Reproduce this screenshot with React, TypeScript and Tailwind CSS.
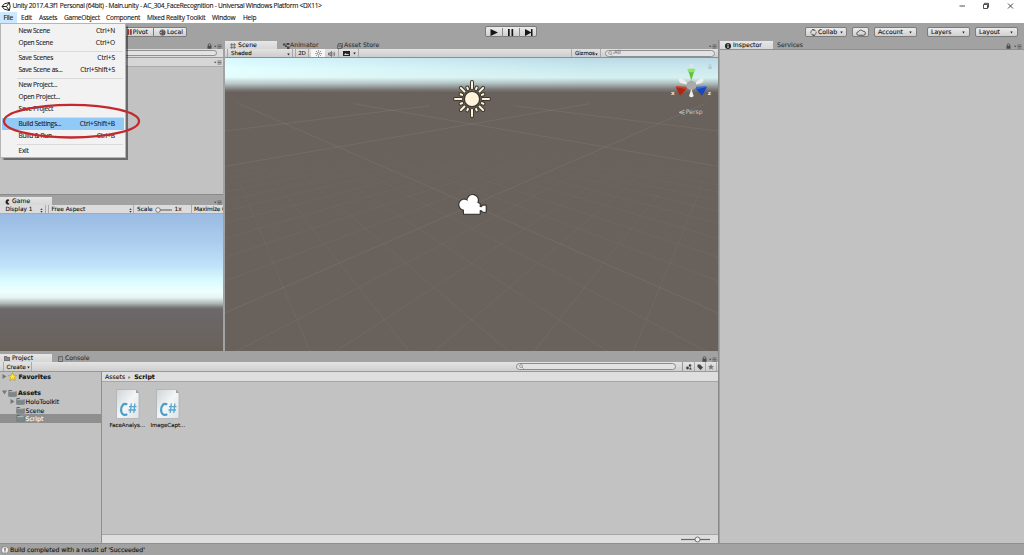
import type { ReactNode } from "react";

const menuBar = [
  { label: "File", cls: "w-[17px] pl-[3.5px] bg-[#cce8ff]" },
  { label: "Edit", cls: "w-[18px] pl-[4px]" },
  { label: "Assets", cls: "w-[25px] pl-[4px]" },
  { label: "GameObject", cls: "w-[42px] pl-[4px]" },
  { label: "Component", cls: "w-[41px] pl-[4px]" },
  { label: "Mixed Reality Toolkit", cls: "w-[65px] pl-[4px]" },
  { label: "Window", cls: "w-[31px] pl-[4px]" },
  { label: "Help", cls: "w-[24px] pl-[4px]" },
];

const fileMenu = [
  [
    { label: "New Scene", keys: "Ctrl+N" },
    { label: "Open Scene", keys: "Ctrl+O" },
  ],
  [
    { label: "Save Scenes", keys: "Ctrl+S" },
    { label: "Save Scene as...", keys: "Ctrl+Shift+S" },
  ],
  [
    { label: "New Project...", keys: "" },
    { label: "Open Project...", keys: "" },
    { label: "Save Project", keys: "" },
  ],
  [
    { label: "Build Settings...", keys: "Ctrl+Shift+B", active: true },
    { label: "Build & Run", keys: "Ctrl+B" },
  ],
  [{ label: "Exit", keys: "" }],
];

const scripts = ["FaceAnalys...", "ImageCapt..."];

/* ---------- small icons ---------- */

const UnityLogo = () => (
  <svg className="h-[11px] w-[10px]" viewBox="0 0 24 24" fill="none" stroke="#222" strokeWidth="2.4">
    <path d="M2.500 12L8 5.500l12-3 2 9.500-2 9.500-12-3zM2.500 12H13M13 12l7-9.500M13 12l7 9.500" />
  </svg>
);

const Lock = ({ cls = "" }: { cls?: string }) => (
  <svg className={`h-[6px] w-[5px] ${cls}`} viewBox="0 0 10 12">
    <path d="M2.5 6V4a2.5 2.5 0 015 0v2" fill="none" stroke="#4a4a4a" strokeWidth="1.6" />
    <rect x="1" y="5.5" width="8" height="6" fill="#4a4a4a" />
  </svg>
);

const PaneMenu = ({ cls = "" }: { cls?: string }) => (
  <svg className={`h-[5px] w-[8px] ${cls}`} viewBox="0 0 16 10">
    <path d="M0 3.5h5L2.5 6.5z" fill="#444" />
    <path d="M7 2h8M7 5h8M7 8h8" stroke="#555" strokeWidth="1.5" />
  </svg>
);

const Caret = ({ cls = "" }: { cls?: string }) => (
  <svg className={`h-[3px] w-[3px] shrink-0 ${cls}`} viewBox="0 0 6 6">
    <path d="M0.500 1h5L3 5z" fill="#222" />
  </svg>
);

const UpDown = ({ cls = "" }: { cls?: string }) => (
  <svg className={`h-[5px] w-[3px] ${cls}`} viewBox="0 0 6 10">
    <path d="M0.5 4h5L3 0.5zM0.5 6h5L3 9.5z" fill="#444" />
  </svg>
);

const Folder = () => (
  <svg className="h-[8px] w-[9px] shrink-0" viewBox="0 0 18 16">
    <path d="M1 3q0-1 1-1h5l1.500 2H16q1 0 1 1v9q0 1-1 1H2q-1 0-1-1z" fill="#5e6668" />
    <path d="M1 7h16v7q0 1-1 1H2q-1 0-1-1z" fill="#7d8789" />
    <path d="M2.500 4.500h13v2h-13z" fill="#c9d0d1" />
  </svg>
);

const Fold = ({ open = false, cls = "h-[5px] w-[5px]" }: { open?: boolean; cls?: string }) => (
  <svg className={`shrink-0 ${cls}`} viewBox="0 0 10 10">
    <path d={open ? "M0 1h10L5 9z" : "M1 0v10l8-5z"} fill="#777" />
  </svg>
);

const Collab = () => (
  <svg className="h-[7px] w-[7px]" viewBox="0 0 14 14" fill="none" stroke="#444" strokeWidth="1.500">
    <path d="M2 9A5.500 5.500 0 017 1.500M12 5A5.500 5.500 0 017 12.500M7 1.500q3 0 4 2.500M7 12.500q-3 0-4-2.500" />
    <path d="M4 1h4v3M10 13H6v-3" />
  </svg>
);

const Cloud = () => (
  <svg className="h-[7px] w-[10px]" viewBox="0 0 20 14" fill="none" stroke="#333" strokeWidth="1.600">
    <path d="M5 12.500a3.500 3.500 0 010-7A5 5 0 0114 4.500a4 4 0 011.500 8z" />
  </svg>
);

const ScriptFile = () => (
  <svg className="h-[32px] w-[25px]" viewBox="0 0 25 32">
    <defs>
      <linearGradient id="paper" x1="0" y1="0" x2="1" y2="1">
        <stop offset="0" stopColor="#cdd3d6" />
        <stop offset="0.5" stopColor="#f3f5f6" />
        <stop offset="1" stopColor="#dfe4e7" />
      </linearGradient>
    </defs>
    <path d="M1.500 1.500h19.500l3 3.500v25.500H1.500z" fill="url(#paper)" stroke="#a9adaf" strokeWidth="0.7" />
    <path d="M21 1.500v3.500h3z" fill="#9aa0a3" />
    <path d="M12.200 16.500q-2.400-1.600-4.400 0.400-2 2.200-1.700 5.600 .300 3.300 2.700 4.200 1.800.500 3.400-.600" fill="none" stroke="#4b9cc6" strokeWidth="2.200" />
    <path d="M16.300 15.500l-1.100 9.500M19.900 15.500l-1.100 9.500M14 18.600h7.500M13.500 22h7.500" fill="none" stroke="#5ba6cc" strokeWidth="1.300" />
  </svg>
);

/* ---------- building blocks ---------- */

const Tab = ({ children, cls = "" }: { children: ReactNode; cls?: string }) => (
  <div className={`flex h-[8px] items-center bg-gradient-to-b from-[#e6e6e6] to-[#d6d6d6] pt-[1px] ${cls}`}>
    {children}
  </div>
);

const ToolButton = ({ children, cls = "" }: { children: ReactNode; cls?: string }) => (
  <div
    className={`flex h-[10px] items-center rounded-[2px] border border-[#7c7c7c] bg-gradient-to-b from-[#ececec] to-[#cfcfcf] pt-[1px] ${cls}`}
  >
    {children}
  </div>
);

const FileMenu = () => (
  <div className="absolute left-0 top-[23px] z-10 h-[135px] w-[126px] border border-[#b5b5b5] bg-[#f2f2f2] pt-[0.6px] font-['Open_Sans',sans-serif] text-[6.6px] leading-[12px] text-[#1a1a1a] shadow-[1.5px_1.5px_1px_rgba(0,0,0,0.45)]">
    {fileMenu.map((group, i) => (
      <div key={i} className={i === 0 ? "" : "mt-[1px] pt-[1px]"}>
        {i > 0 && <div className="ml-[16px] mr-[2px] h-[1px] bg-[#dadada]" />}
        {group.map((item) => (
          <div
            key={item.label}
            className={`mx-[1px] flex h-[12px] justify-between pl-[16.5px] pr-[9px] ${
              "active" in item ? "bg-[#91c9f7]" : ""
            }`}
          >
            <span className="tracking-[-0.25px]">{item.label}</span>
            <span className="tracking-[-0.1px]">{item.keys}</span>
          </div>
        ))}
      </div>
    ))}
  </div>
);

const Highlight = () => (
  <svg className="absolute left-0 top-[100px] z-20 h-[42px] w-[144px]" viewBox="0 0 144 42">
    <ellipse cx="71.500" cy="21.200" rx="67.500" ry="16.300" fill="none" stroke="#c22a2f" strokeWidth="2.300" />
  </svg>
);

// lines of the ground plane, both families meet on the centre axis
const HORIZON = 95;
const gridLines = Array.from({ length: 17 }, (_, i) => {
  const k = i - 3;
  const y = HORIZON + 1 / (0.00143 + 0.00046 * k);
  return { slope: (y - HORIZON) / 815, major: k === 3 };
});

const SceneView = () => (
  <div className="relative h-[293px] overflow-hidden bg-[#69615b]">
    <div className="absolute inset-x-0 top-0 h-[34px] bg-[linear-gradient(180deg,#bad9e6_0%,#c9e8ee_30%,#d6f0f0_58%,#b5c8c8_72%,#7c7a78_92%,#6c6663_100%)]" />
    <div className="absolute inset-x-0 top-0 h-[33px] bg-[linear-gradient(180deg,#d6f8ff_0%,#e4ffff_35%,#e4fcfb_58%,#b8c6c6_78%,#6e6967_100%)] [mask-image:linear-gradient(90deg,black,transparent_75%)]" />
    <svg className="absolute inset-0 h-[293px] w-[493px]" viewBox="15 9 1479 879" fill="none">
      <defs>
        <linearGradient id="far" x1="0" y1="95" x2="0" y2="888" gradientUnits="userSpaceOnUse">
          <stop offset="0.2" stopColor="#fff" stopOpacity="0" />
          <stop offset="0.4" stopColor="#fff" stopOpacity="0.6" />
          <stop offset="1" stopColor="#fff" />
        </linearGradient>
        <mask id="fade" maskUnits="userSpaceOnUse" x="0" y="95" width="1510" height="800">
          <rect x="0" y="95" width="1510" height="800" fill="url(#far)" />
        </mask>
        <clipPath id="ground">
          <rect x="0" y="145" width="1510" height="760" />
        </clipPath>
      </defs>
      {gridLines.map(({ slope, major }, i) => (
        <g
          key={i}
          stroke="#8c8b88"
          strokeWidth="2.500"
          strokeOpacity={major ? 0.32 : 0.26}
          mask={major ? undefined : "url(#fade)"}
          clipPath="url(#ground)"
        >
          <path d={`M-60 ${HORIZON}L1600 ${HORIZON + 1660 * slope}`} />
          <path d={`M1570 ${HORIZON}L-90 ${HORIZON + 1660 * slope}`} />
        </g>
      ))}
      <g stroke="#8c8b88" strokeWidth="2.500" strokeOpacity="0.32">
        <path d="M400 146L1494 334M1110 146L15 334" />
        <path d="M880 152L1494 228M630 152L15 228" />
      </g>

      {/* directional light */}
      {["#3d3932", "#fff3da"].map((color, i) => (
        <g key={color} stroke={color} strokeWidth={i === 0 ? 12 : 6} strokeLinecap="round">
          {Array.from({ length: 16 }, (_, r) => (
            <path
              key={r}
              d={r % 4 === 0 ? "M0 -32V-51" : r % 2 === 0 ? "M0 -32V-47" : "M0 -32V-37"}
              transform={`translate(756 132) rotate(${r * 22.5})`}
            />
          ))}
          <circle cx="756" cy="132" r={i === 0 ? 19 : 18} fill={color} />
        </g>
      ))}

      {/* camera */}
      <g fill="#fff" stroke="#3a3633" strokeWidth="7" strokeLinejoin="round" paintOrder="stroke">
        <path d="M732 476V464A15 15 0 11743 438A15.500 15.500 0 11772 443L779 447V456L784 457L789 452H797V470H789L784 465L779 466V476Z" />
      </g>

      {/* orientation gizmo */}
      <g>
        <path d="M1414 92L1390 74a5 9 -45 00-8 10zM1414 92L1437 74a5 9 45 018 10z" fill="#eee" />
        <path d="M1403 42h22l-11 34z" fill="#5fc437" />
        <path d="M1402 43q12 -5 24 0l-3 7q-9 3 -18 0z" fill="#8be566" />
        <path d="M1367 96L1402 99L1380 122z" fill="#a92814" />
        <path d="M1367 96L1371 93L1402 96L1398 103z" fill="#d14127" />
        <path d="M1461 96L1426 99L1446 122z" fill="#1946b8" />
        <path d="M1461 96L1457 93L1426 96L1430 103z" fill="#3668e8" />
        <path d="M1400 84l14-8 14 7v15l-14 9-14-8z" fill="#aaa9a8" />
        <path d="M1414 102l7 21q-7 8-14 0z" fill="#eee" />
        <path d="M1394 165l-16 7 16 7M1378 172h16" stroke="#ccc" strokeWidth="2" />
      </g>
      <g fill="#e8e8e8" className="font-['DejaVu_Sans',sans-serif] text-[17px] font-bold">
        <text x="1408" y="37">y</text>
        <text x="1353" y="121">x</text>
        <text x="1463" y="121">z</text>
        <text x="1397" y="178" className="text-[18.5px] font-normal" fill="#c8c8c8">Persp</text>
      </g>
      <path d="M1467 34v-5q3-4 6 0v5" stroke="#b9c5c7" strokeWidth="2" />
      <rect x="1465" y="34" width="10" height="8" fill="#b9c5c7" />
    </svg>
  </div>
);

const TitleBar = () => (
  <div className="flex h-[12px] items-center bg-white pl-[1px] font-['Open_Sans',sans-serif]">
    <UnityLogo />
    <span className="ml-[1.500px] pt-[1px] text-[6.600px] tracking-[-0.255px]">
      Unity 2017.4.3f1 Personal (64bit) - Main.unity - AC_304_FaceRecognition - Universal Windows Platform &lt;DX11&gt;
    </span>
    <svg className="ml-auto mr-[9px] h-[8px] w-[56px]" viewBox="0 0 56 8" fill="none" stroke="#222" strokeWidth="0.800">
      <path d="M0.500 4h5.500M24.500 2.500h4v4h-4zM25.500 2.500v-1.200h4v4h-1M49 1.500l5 5M54 1.500l-5 5" />
    </svg>
  </div>
);

const MainToolbar = () => (
  <div className="flex h-[17px] items-center bg-[#a2a2a2]">
    <ToolButton cls="ml-[110px] w-[43px] justify-end rounded-r-none border-r-0 pr-[5px]">
      <svg className="mr-[1px] h-[6px] w-[5px]" viewBox="0 0 10 12">
        <path d="M1 1h3v10H1M6 1h3v10H6" fill="#a33" stroke="#444" />
      </svg>
      Pivot
    </ToolButton>
    <ToolButton cls="w-[34px] gap-[1px] rounded-l-none pl-[5px]">
      <svg className="h-[7px] w-[7px]" viewBox="0 0 14 14" fill="none" stroke="#444" strokeWidth="1.400">
        <circle cx="7" cy="7" r="5.500" fill="#c7bebe" />
        <path d="M2 5h10M2 9h10M7 2v10" />
        <path d="M6 7h5v4H6z" fill="#a55" />
      </svg>
      Local
    </ToolButton>
    <ToolButton cls="ml-[298px] h-[11px] w-[52px] pt-0">
      <svg className="h-[9px] w-[50px]" viewBox="0 0 50 9">
        <path d="M4.500 1l7.500 3.500L4.500 8zM22 1h1.700v7H22zM25.500 1h1.700v7h-1.700zM39 1l6.500 3.500L39 8zM45 1h1.500v7H45z" fill="#161616" />
        <path d="M16.500 0v9M33.500 0v9" stroke="#888" />
      </svg>
    </ToolButton>
    <ToolButton cls="ml-[268px] w-[42px] gap-[1px] pl-[4px]">
      <Collab />
      Collab
      <Caret cls="ml-[2px]" />
    </ToolButton>
    <ToolButton cls="ml-[5px] w-[17px] justify-center">
      <Cloud />
    </ToolButton>
    <ToolButton cls="ml-[5px] w-[43px] justify-between pl-[3px] pr-[4px]">
      Account <Caret />
    </ToolButton>
    <ToolButton cls="ml-[10px] w-[43px] justify-between pl-[3px] pr-[4px]">
      Layers <Caret />
    </ToolButton>
    <ToolButton cls="ml-[5px] w-[43px] justify-between pl-[3px] pr-[4px]">
      Layout <Caret />
    </ToolButton>
  </div>
);

const GameView = () => (
  <>
    <div className="flex h-[11px] items-end border-t border-[#8a8a8a] bg-[#a2a2a2]">
      <Tab cls="w-[52px] pl-[5px]">
        <svg className="mr-[2px] h-[6px] w-[5px]" viewBox="0 0 10 12">
          <path d="M9 2Q5-1 2 3q-2 3 0 6 3 4 7 1L5 6z" fill="#222" />
        </svg>
        Game
      </Tab>
      <PaneMenu cls="ml-auto mr-[1px]" />
    </div>
    <div className="flex h-[9px] items-center overflow-hidden border-b border-[#aaa] bg-[#dcdcdc] text-[5.800px]">
      <div className="flex h-full w-[46px] items-center justify-between border-r border-[#aaa] pl-[5.500px] pr-[2px] pt-[2px]">
        Display 1 <UpDown />
      </div>
      <div className="ml-[2px] flex h-full w-[86px] items-center justify-between border-x border-[#aaa] pl-[2.500px] pr-[1px] pt-[2px]">
        Free Aspect <UpDown />
      </div>
      <span className="ml-[3px] pt-[2px]">Scale</span>
      <svg className="ml-[2px] mt-[1px] h-[6px] w-[17px] shrink-0" viewBox="0 0 17 6">
        <path d="M3 3h14" stroke="#555" />
        <circle cx="3" cy="3" r="2.300" fill="#eee" stroke="#555" strokeWidth="0.700" />
      </svg>
      <span className="ml-[3px] pt-[2px]">1x</span>
      <div className="ml-auto flex h-full w-[32px] shrink-0 items-center overflow-hidden whitespace-nowrap border-l border-[#aaa] pl-[2px] pt-[2px] tracking-[-0.150px]">
        Maximize O
      </div>
    </div>
    <div className="h-[137px] bg-[linear-gradient(180deg,#9bbbe2_0%,#aacdee_20%,#c1e3fa_38%,#dafcff_49%,#efffff_57%,#e4f4f3_61%,#abb3b3_65.500%,#7c7c7b_68%,#6c686a_69.500%,#69615b_100%)]" />
  </>
);

const SceneToolbar = () => (
  <div className="flex h-[9px] items-center border-b border-[#8f8f8f] bg-gradient-to-b from-[#e2e2e2] to-[#cdcdcd] text-[5.500px]">
    <div className="ml-[2px] flex h-full w-[66px] items-center justify-between border-x border-[#aaa] pl-[3px] pr-[2px] pt-[2px]">
      Shaded <Caret />
    </div>
    <div className="ml-[2px] flex h-full w-[14px] items-center justify-center border-x border-[#aaa] pt-[2px]">2D</div>
    <div className="ml-[2px] flex h-full w-[14px] items-center justify-center bg-[#f6f6f6]">
      <svg className="h-[7px] w-[7px]" viewBox="0 0 14 14" fill="none" stroke="#555" strokeWidth="1.200">
        <circle cx="7" cy="7" r="2.400" />
        <path d="M7 0v3M7 11v3M0 7h3M11 7h3M2 2l2 2M10 10l2 2M12 2l-2 2M4 10l-2 2" />
      </svg>
    </div>
    <div className="flex h-full w-[14px] items-center justify-center border-r border-[#aaa] pt-[1px]">
      <svg className="h-[6px] w-[8px]" viewBox="0 0 16 12" fill="none" stroke="#555" strokeWidth="1.300">
        <path d="M1 4h3l3-3v10L4 8H1z" fill="#999" />
        <path d="M9.500 3q2 3 0 6M12 1.500q3 4.500 0 9" />
      </svg>
    </div>
    <div className="flex h-full w-[20px] items-center justify-between border-r border-[#aaa] pl-[4px] pr-[2px] pt-[1px]">
      <svg className="h-[5px] w-[7px]" viewBox="0 0 14 10">
        <path d="M0 0h14v10H0z" fill="#222" />
        <path d="M2 8l3-4 3 3 2-2 2 3z" fill="#ddd" />
      </svg>
      <Caret />
    </div>
    <div className="ml-auto flex h-full w-[30px] items-center justify-between border-x border-[#aaa] pl-[3px] pr-[2px] pt-[2px] tracking-[-0.100px]">
      Gizmos <Caret />
    </div>
    <div className="ml-[4px] mr-[3px] flex h-[7px] w-[110px] items-center rounded-full border border-[#909090] bg-[#e2e2e2] pl-[2px] text-[#777]">
      <svg className="h-[5px] w-[6px] shrink-0" viewBox="0 0 12 10" fill="none" stroke="#888" strokeWidth="1.200">
        <circle cx="4" cy="4" r="3" />
        <path d="M6 6l3 3M9 4h3" />
      </svg>
      All
    </div>
  </div>
);

const ProjectPanel = () => (
  <div className="flex w-[718px] flex-col">
    <div className="flex h-[11px] items-end bg-[#a2a2a2]">
      <Tab cls="w-[52px] pl-[4px]">
        <svg className="mr-[2px] h-[5px] w-[6px]" viewBox="0 0 12 10">
          <path d="M0.500 1h5l1 2h5v6.500h-11z" fill="#888" stroke="#333" />
        </svg>
        Project
      </Tab>
      <div className="ml-[6px] flex h-[8px] items-center gap-[2px] pt-[1px] text-[#333]">
        <svg className="h-[6px] w-[5px]" viewBox="0 0 10 12" fill="none" stroke="#333">
          <path d="M1 1h8v10H1zM3 3.500h2M3 6h2" />
        </svg>
        Console
      </div>
      <Lock cls="ml-auto mr-[2px]" />
      <PaneMenu cls="mr-[1px]" />
    </div>
    <div className="flex h-[10px] items-center border-b border-[#999] bg-gradient-to-b from-[#e4e4e4] to-[#cecece] text-[5.800px]">
      <div className="ml-[3px] flex h-full w-[29px] items-center gap-[1px] border-x border-[#aaa] pl-[2.500px] pt-[2px]">
        Create <Caret />
      </div>
      <div className="ml-auto mr-[6px] flex h-[7px] w-[160px] items-center rounded-full border border-[#8b8b8b] bg-[#e2e2e2] pl-[2px]">
        <svg className="h-[5px] w-[5px]" viewBox="0 0 10 10" fill="none" stroke="#777" strokeWidth="1.200">
          <circle cx="4" cy="4" r="3" />
          <path d="M6 6l3.500 3.500" />
        </svg>
      </div>
      <div className="flex h-full w-[12px] items-center justify-center border-l border-[#999]">
        <svg className="h-[6px] w-[6px]" viewBox="0 0 12 12" fill="#444">
          <circle cx="8" cy="3" r="2.500" />
          <circle cx="3" cy="8" r="2.800" />
          <path d="M6 11l2.800-5 2.800 5z" />
        </svg>
      </div>
      <div className="flex h-full w-[12px] items-center justify-center border-x border-[#aaa]">
        <svg className="h-[6px] w-[6px]" viewBox="0 0 12 12" fill="#444">
          <path d="M1 1h5l6 6-5 5-6-6z" />
        </svg>
      </div>
      <div className="mr-[1px] flex h-full w-[11px] items-center justify-center border-r border-[#aaa]">
        <svg className="h-[6px] w-[6px]" viewBox="0 0 12 12" fill="#777">
          <path d="M6 0l1.800 4H12L8.700 7l1.200 4.500L6 9l-3.900 2.500L3.300 7 0 4h4.200z" />
        </svg>
      </div>
    </div>
    <div className="flex h-[171px]">
      {/* folder tree */}
      <div className="w-[102px] border-r border-[#8f8f8f] bg-[#c2c2c2] text-[6.200px]">
        <div className="flex h-[9px] items-center pl-[2px] font-bold">
          <Fold />
          <svg className="mx-[1.250px] h-[9px] w-[9px]" viewBox="0 0 18 18">
            <path d="M9 1l2.500 5.500 6 .600-4.500 4 1.300 6L9 14l-5.300 3.100L5 11.100l-4.500-4 6-.600z" fill="#ffe23e" stroke="#a8862a" />
          </svg>
          <span className="pt-[2px]">Favorites</span>
        </div>
        <div className="mt-[7px] flex h-[9px] items-center gap-[1px] pl-[2px] font-bold">
          <Fold open />
          <Folder />
          <span className="pt-[2px]">Assets</span>
        </div>
        <div className="flex h-[8.500px] items-center gap-[1px] pl-[9.500px]">
          <Fold />
          <Folder />
          <span className="pt-[2px]">HoloToolkit</span>
        </div>
        <div className="flex h-[8.500px] items-center gap-[1px] pl-[15.500px]">
          <Folder />
          <span className="pt-[2px]">Scene</span>
        </div>
        <div className="flex h-[8.500px] items-center gap-[1px] bg-[#8f8f8f] pl-[15.500px] text-white">
          <Folder />
          <span className="pt-[2px]">Script</span>
        </div>
      </div>
      <div className="flex flex-1 flex-col bg-[#c2c2c2]">
        <div className="flex h-[10px] items-center border-b border-[#a6a6a6] bg-[#dedede] pl-[3px] pt-[2px]">
          Assets
          <Fold cls="mx-[3px] h-[3px] w-[3px]" />
          <span className="font-bold">Script</span>
        </div>
        <div className="flex flex-1 pl-[5px] pt-[6px] text-[5.500px]">
          {scripts.map((name) => (
            <div key={name} className="flex w-[40.500px] flex-col items-center whitespace-nowrap">
              <ScriptFile />
              <span className="mt-[1px] leading-[8px] tracking-[-0.050px]">{name}</span>
            </div>
          ))}
        </div>
        <div className="flex h-[9px] items-center justify-end border-t border-[#a6a6a6] bg-[#dedede] pr-[8px]">
          <svg className="h-[7px] w-[30px]" viewBox="0 0 30 7">
            <path d="M1 3.500h29" stroke="#666" strokeWidth="1.200" />
            <circle cx="17.500" cy="3.500" r="2.500" fill="#eee" stroke="#555" strokeWidth="0.800" />
          </svg>
        </div>
      </div>
    </div>
  </div>
);

const App = () => {
  return (
    <div className="relative flex h-[555px] w-[1024px] flex-col overflow-hidden whitespace-nowrap bg-[#a2a2a2] font-['DejaVu_Sans',sans-serif] text-[6.200px] leading-none text-[#111] [-webkit-text-stroke:0.1px]">
      <TitleBar />
      <div className="flex h-[11px] items-center bg-white font-['Open_Sans',sans-serif] text-[6.600px] leading-[11px] tracking-[-0.240px]">
        {menuBar.map((item) => (
          <div key={item.label} className={`h-[11px] ${item.cls}`}>
            {item.label}
          </div>
        ))}
      </div>
      <MainToolbar />

      <div className="flex h-[503px]">
        <div className="flex w-[719px] flex-col border-r border-[#8a8a8a]">
          <div className="flex h-[311px]">
            {/* hierarchy + game */}
            <div className="flex w-[223px] flex-col">
              <div className="flex h-[9px] items-end justify-end gap-[2px] pr-[1px]">
                <Lock />
                <PaneMenu />
              </div>
              <div className="flex h-[9px] items-center justify-end border-b border-[#999] bg-[#dcdcdc] pr-[6px]">
                <div className="h-[6px] w-[120px] rounded-full border border-[#909090] bg-[#e2e2e2]" />
              </div>
              <div className="flex h-[9px] items-center justify-end border-b border-[#aaa] bg-[#d6d6d6] pr-[1px]">
                <PaneMenu />
              </div>
              <div className="flex-1 bg-[#c2c2c2]" />
              <GameView />
            </div>

            {/* scene */}
            <div className="ml-[2px] w-[493px]">
              <div className="flex h-[9px] items-end text-[#333]">
                <Tab cls="w-[52px] gap-[2px] pl-[5px] text-[#111]">
                  <svg className="h-[6px] w-[6px]" viewBox="0 0 12 12" stroke="#444" strokeWidth="1.200">
                    <path d="M3.500 0v12M8.500 0v12M0 3.500h12M0 8.500h12" />
                  </svg>
                  Scene
                </Tab>
                <div className="ml-[6px] flex h-[8px] w-[54px] items-center pt-[1px]">
                  <svg className="h-[6px] w-[7px]" viewBox="0 0 14 12" fill="#444">
                    <path d="M0 1h5v4H0zM7 0h6v4H7zM4 5h4v3H4zM8 7h5v5H8z" />
                  </svg>
                  Animator
                </div>
                <div className="flex h-[8px] items-center gap-[1px] pt-[1px]">
                  <svg className="h-[6px] w-[6px]" viewBox="0 0 12 12" fill="none" stroke="#444" strokeWidth="1.300">
                    <path d="M1 4h8v7H1zM3 4V1h8v8H9M3 7h4" />
                  </svg>
                  Asset Store
                </div>
                <PaneMenu cls="ml-auto mr-[1px]" />
              </div>
              <SceneToolbar />
              <SceneView />
            </div>
          </div>
          <ProjectPanel />
        </div>

        {/* inspector */}
        <div className="ml-[1px] flex flex-1 flex-col">
          <div className="flex h-[9px] items-end text-[#333]">
            <Tab cls="w-[53px] gap-[2px] pl-[5px] text-[#111]">
              <svg className="h-[6px] w-[6px]" viewBox="0 0 12 12">
                <circle cx="6" cy="6" r="6" fill="#222" />
                <path d="M6 2v2M6 5v5" stroke="#fff" strokeWidth="2" />
              </svg>
              Inspector
            </Tab>
            <div className="ml-[4px] flex h-[8px] items-center pt-[1px]">Services</div>
            <Lock cls="ml-auto mr-[3px]" />
            <PaneMenu cls="mr-[2px]" />
          </div>
          <div className="flex-1 border-t border-[#8f8f8f] bg-[#c2c2c2]" />
        </div>
      </div>

      <div className="flex h-[12px] items-center gap-[1px] border-t border-[#8f8f8f] pl-[1px]">
        <svg className="h-[8px] w-[8px]" viewBox="0 0 16 16">
          <circle cx="8" cy="8" r="7" fill="#f3f3f3" stroke="#555" />
          <path d="M8 3.500v6M8 11v2" stroke="#333" strokeWidth="2" />
        </svg>
        <span className="pt-[2px] tracking-[-0.070px]">Build completed with a result of 'Succeeded'</span>
      </div>

      <FileMenu />
      <Highlight />
    </div>
  );
};

export default App;
